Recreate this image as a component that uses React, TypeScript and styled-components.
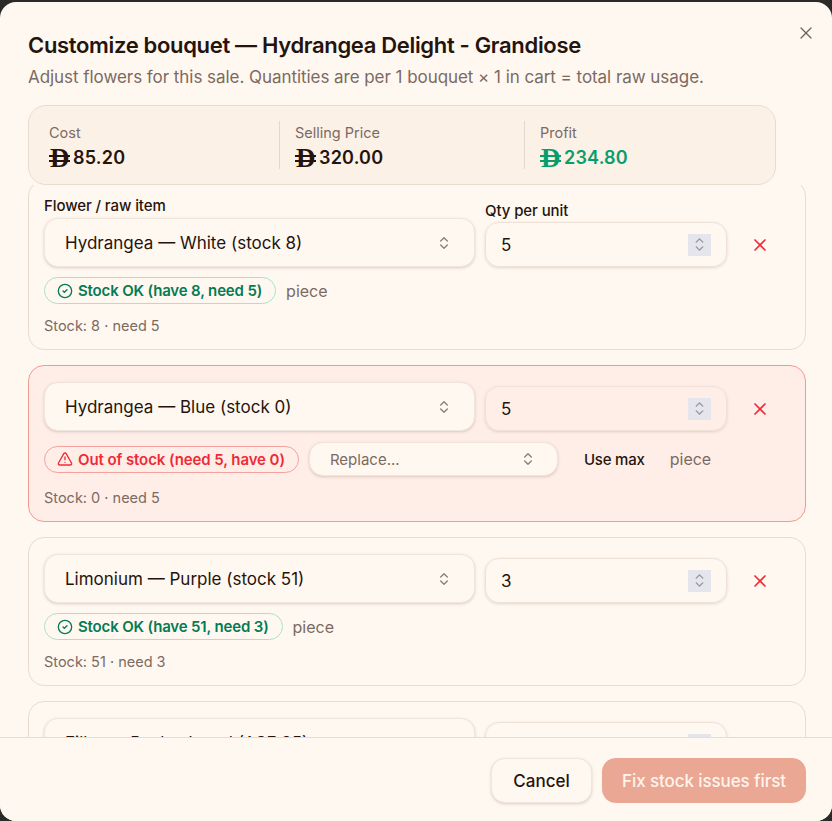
import { ChevronDown, ChevronUp, ChevronsUpDown, CircleCheck, TriangleAlert, X } from "lucide-react";
import styled, { createGlobalStyle } from "styled-components";

const GlobalStyle = createGlobalStyle`
  html, body {
    margin: 0;
    height: 100%;
    background: #2b2a29;
  }
  #root {
    height: 100%;
  }
  * {
    box-sizing: border-box;
  }
`;

const Page = styled.div`
  height: 821px;
  padding-top: 2px;
  overflow: hidden;
  font-family: Inter, "Liberation Sans", sans-serif;
  color: #25140d;
`;

const Modal = styled.div`
  position: relative;
  height: 819px;
  display: flex;
  flex-direction: column;
  background: #fff8f1;
  border-radius: 16px;
  overflow: hidden;
`;

const CloseButton = styled.button`
  position: absolute;
  top: 21px;
  right: 16px;
  width: 20px;
  height: 20px;
  padding: 0;
  display: flex;
  border: none;
  background: none;
  color: #6b5f59;
`;

const Header = styled.header`
  padding: 29px 28px 0;
  height: 103px;
`;

const Title = styled.h2`
  margin: 0;
  font-size: 22px;
  line-height: 28px;
  font-weight: 600;
  letter-spacing: -0.33px;
`;

const Subtitle = styled.p`
  margin: 6px 0 0;
  font-size: 17px;
  line-height: 24px;
  color: #7b6a62;
  letter-spacing: -0.05px;
`;

const Scroll = styled.div`
  flex: 1;
  min-height: 0;
  overflow: hidden;
  padding: 0 26px 0 28px;
  display: flex;
  flex-direction: column;
  gap: 15px;
`;

const SummaryBar = styled.div`
  position: relative;
  z-index: 2;
  flex: none;
  height: 80px;
  margin-bottom: -20px;
  background: #fff8f1;
`;

const Summary = styled.section`
  width: 748px;
  height: 80px;
  display: grid;
  grid-template-columns: 230px 245px 245px;
  align-items: center;
  padding: 0 0 0 20px;
  background: #fbf1e7;
  border: 1px solid #e8dccf;
  border-radius: 18px;
`;

const Stat = styled.div<{ $first?: boolean }>`
  height: 48px;
  padding-left: ${(p) => (p.$first ? 0 : 15)}px;
  border-left: ${(p) => (p.$first ? "none" : "1px solid #e4d8cb")};
`;

const StatLabel = styled.div`
  font-size: 14.5px;
  line-height: 24px;
  color: #7b6a62;
`;

const StatValue = styled.div<{ $green?: boolean }>`
  display: flex;
  align-items: center;
  font-size: 18px;
  line-height: 26px;
  font-weight: 600;
  letter-spacing: 0.2px;
  color: ${(p) => (p.$green ? "#0a9d6c" : "#25140d")};
`;

const Dirham = styled.span`
  position: relative;
  width: 24px;
  font-family: "Liberation Serif", serif;
  font-size: 27px;
  font-weight: 700;
  line-height: 26px;
  padding-left: 1px;
  letter-spacing: 0;
  &::before,
  &::after {
    content: "";
    position: absolute;
    left: 0;
    width: 21px;
    height: 2px;
    background: currentColor;
  }
  &::before {
    top: 10px;
  }
  &::after {
    top: 15px;
  }
`;

const Card = styled.article<{ $danger?: boolean }>`
  flex: none;
  padding: 16px 15px 15px;
  border: 1px solid ${(p) => (p.$danger ? "#f29a92" : "#e8dccf")};
  background: ${(p) => (p.$danger ? "#ffeee8" : "transparent")};
  border-radius: 16px;
`;

const FieldRow = styled.div`
  display: grid;
  grid-template-columns: 431px 242px 46px;
  gap: 10px;
  align-items: end;
`;

const Field = styled.div<{ $gap: number }>`
  display: flex;
  flex-direction: column;
  gap: ${(p) => p.$gap}px;
`;

const Label = styled.label`
  font-size: 15px;
  line-height: 17px;
  font-weight: 500;
  letter-spacing: -0.1px;
`;

const SelectBox = styled.button<{ $small?: boolean }>`
  width: 100%;
  height: ${(p) => (p.$small ? 34 : 49)}px;
  padding: 0 ${(p) => (p.$small ? 21 : 22)}px 0 20px;
  display: flex;
  align-items: center;
  justify-content: space-between;
  font-family: inherit;
  font-size: ${(p) => (p.$small ? 15 : 17)}px;
  color: ${(p) => (p.$small ? "#7b6a62" : "#25140d")};
  background: #fff8f1;
  border: 1px solid #f0e6db;
  border-radius: 14px;
  box-shadow: 0 1px 3px rgba(90, 60, 30, 0.22);
  svg {
    color: #8b7f78;
  }
`;

const QtyBox = styled.div`
  position: relative;
  height: 45px;
  padding: 0 15px;
  display: flex;
  align-items: center;
  justify-content: space-between;
  font-size: 17px;
  border: 1px solid #eee2d6;
  border-radius: 14px;
  box-shadow: 0 1px 3px rgba(90, 60, 30, 0.18);
`;

const Spinner = styled.span`
  width: 23px;
  height: 22px;
  display: flex;
  flex-direction: column;
  align-items: center;
  justify-content: center;
  background: #e5e5ec;
  color: #94949e;
  svg {
    margin: -2.5px 0;
  }
`;

const DeleteButton = styled.button`
  height: 45px;
  padding: 0;
  display: flex;
  align-items: center;
  justify-content: center;
  border: none;
  background: none;
  color: #ee2b36;
`;

const StatusRow = styled.div<{ $danger?: boolean }>`
  margin-top: ${(p) => (p.$danger ? 11 : 10)}px;
  height: ${(p) => (p.$danger ? 34 : 27)}px;
  display: flex;
  align-items: center;
  font-size: 16px;
`;

const Chip = styled.span<{ $danger?: boolean }>`
  height: 27px;
  padding: 0 13px 0 12px;
  display: inline-flex;
  align-items: center;
  gap: 5px;
  font-size: 15px;
  font-weight: 600;
  letter-spacing: ${(p) => (p.$danger ? -0.09 : -0.16)}px;
  color: ${(p) => (p.$danger ? "#ee2b36" : "#047a55")};
  border: 1px solid ${(p) => (p.$danger ? "#f5a09c" : "#a8e3c6")};
  border-radius: 14px;
`;

const ReplaceWrap = styled.div`
  width: 249px;
  margin-left: 10px;
`;

const UseMax = styled.button`
  margin-left: 26px;
  padding: 0;
  font-family: inherit;
  font-size: 15px;
  font-weight: 500;
  color: #25140d;
  letter-spacing: -0.2px;
  background: none;
  border: none;
`;

const Unit = styled.span<{ $wide?: boolean }>`
  margin-left: ${(p) => (p.$wide ? 25 : 10)}px;
  color: #7b6a62;
`;

const StockLine = styled.div`
  margin-top: 13px;
  font-size: 14.5px;
  line-height: 17px;
  color: #7b6a62;
`;

const Footer = styled.footer`
  position: relative;
  z-index: 2;
  flex: none;
  height: 84px;
  padding: 20px 26px 0 0;
  display: flex;
  justify-content: flex-end;
  gap: 10px;
  background: #fff8f1;
  border-top: 1px solid #e8dccf;
`;

const CancelButton = styled.button`
  width: 101px;
  height: 45px;
  font-family: inherit;
  font-size: 17px;
  font-weight: 500;
  color: #25140d;
  background: #fff8f1;
  border: 1px solid #f0e6db;
  border-radius: 14px;
  box-shadow: 0 1px 3px rgba(90, 60, 30, 0.22);
`;

const SubmitButton = styled.button`
  width: 204px;
  height: 45px;
  font-family: inherit;
  font-size: 17px;
  font-weight: 500;
  letter-spacing: -0.1px;
  color: #fff4ec;
  background: #eaa794;
  border: none;
  border-radius: 14px;
`;

type Line = {
  name: string;
  qty: number;
  stock: number;
  label?: boolean;
};

const lines: Line[] = [
  { name: "Hydrangea — White (stock 8)", qty: 5, stock: 8, label: true },
  { name: "Hydrangea — Blue (stock 0)", qty: 5, stock: 0 },
  { name: "Limonium — Purple (stock 51)", qty: 3, stock: 51 },
  { name: "Filler — Bexley Ivood (ASF 25)", qty: 1, stock: 25 },
];

function Price({ value, green }: { value: string; green?: boolean }) {
  return (
    <StatValue $green={green}>
      <Dirham>D</Dirham>
      {value}
    </StatValue>
  );
}

function LineCard({ line }: { line: Line }) {
  const out = line.stock === 0;
  return (
    <Card $danger={out}>
      <FieldRow>
        <Field $gap={4}>
          {line.label && <Label>Flower / raw item</Label>}
          <SelectBox>
            {line.name}
            <ChevronsUpDown size={16} />
          </SelectBox>
        </Field>
        <Field $gap={3}>
          {line.label && <Label>Qty per unit</Label>}
          <QtyBox>
            {line.qty}
            <Spinner>
              <ChevronUp size={13} strokeWidth={2.5} />
              <ChevronDown size={13} strokeWidth={2.5} />
            </Spinner>
          </QtyBox>
        </Field>
        <DeleteButton>
          <X size={20} />
        </DeleteButton>
      </FieldRow>
      <StatusRow $danger={out}>
        {out ? (
          <>
            <Chip $danger>
              <TriangleAlert size={16} />
              Out of stock (need {line.qty}, have {line.stock})
            </Chip>
            <ReplaceWrap>
              <SelectBox $small>
                Replace...
                <ChevronsUpDown size={16} />
              </SelectBox>
            </ReplaceWrap>
            <UseMax>Use max</UseMax>
            <Unit $wide>piece</Unit>
          </>
        ) : (
          <>
            <Chip>
              <CircleCheck size={16} />
              Stock OK (have {line.stock}, need {line.qty})
            </Chip>
            <Unit>piece</Unit>
          </>
        )}
      </StatusRow>
      <StockLine>
        Stock: {line.stock} · need {line.qty}
      </StockLine>
    </Card>
  );
}

export default function App() {
  return (
    <Page>
      <GlobalStyle />
      <Modal>
        <CloseButton>
          <X size={20} strokeWidth={1.5} />
        </CloseButton>
        <Header>
          <Title>Customize bouquet — Hydrangea Delight - Grandiose</Title>
          <Subtitle>
            Adjust flowers for this sale. Quantities are per 1 bouquet × 1 in cart = total raw usage.
          </Subtitle>
        </Header>
        <Scroll>
          <SummaryBar>
            <Summary>
              <Stat $first>
                <StatLabel>Cost</StatLabel>
                <Price value="85.20" />
              </Stat>
              <Stat>
                <StatLabel>Selling Price</StatLabel>
                <Price value="320.00" />
              </Stat>
              <Stat>
                <StatLabel>Profit</StatLabel>
                <Price value="234.80" green />
              </Stat>
            </Summary>
          </SummaryBar>
          {lines.map((line) => (
            <LineCard key={line.name} line={line} />
          ))}
        </Scroll>
        <Footer>
          <CancelButton>Cancel</CancelButton>
          <SubmitButton>Fix stock issues first</SubmitButton>
        </Footer>
      </Modal>
    </Page>
  );
}
